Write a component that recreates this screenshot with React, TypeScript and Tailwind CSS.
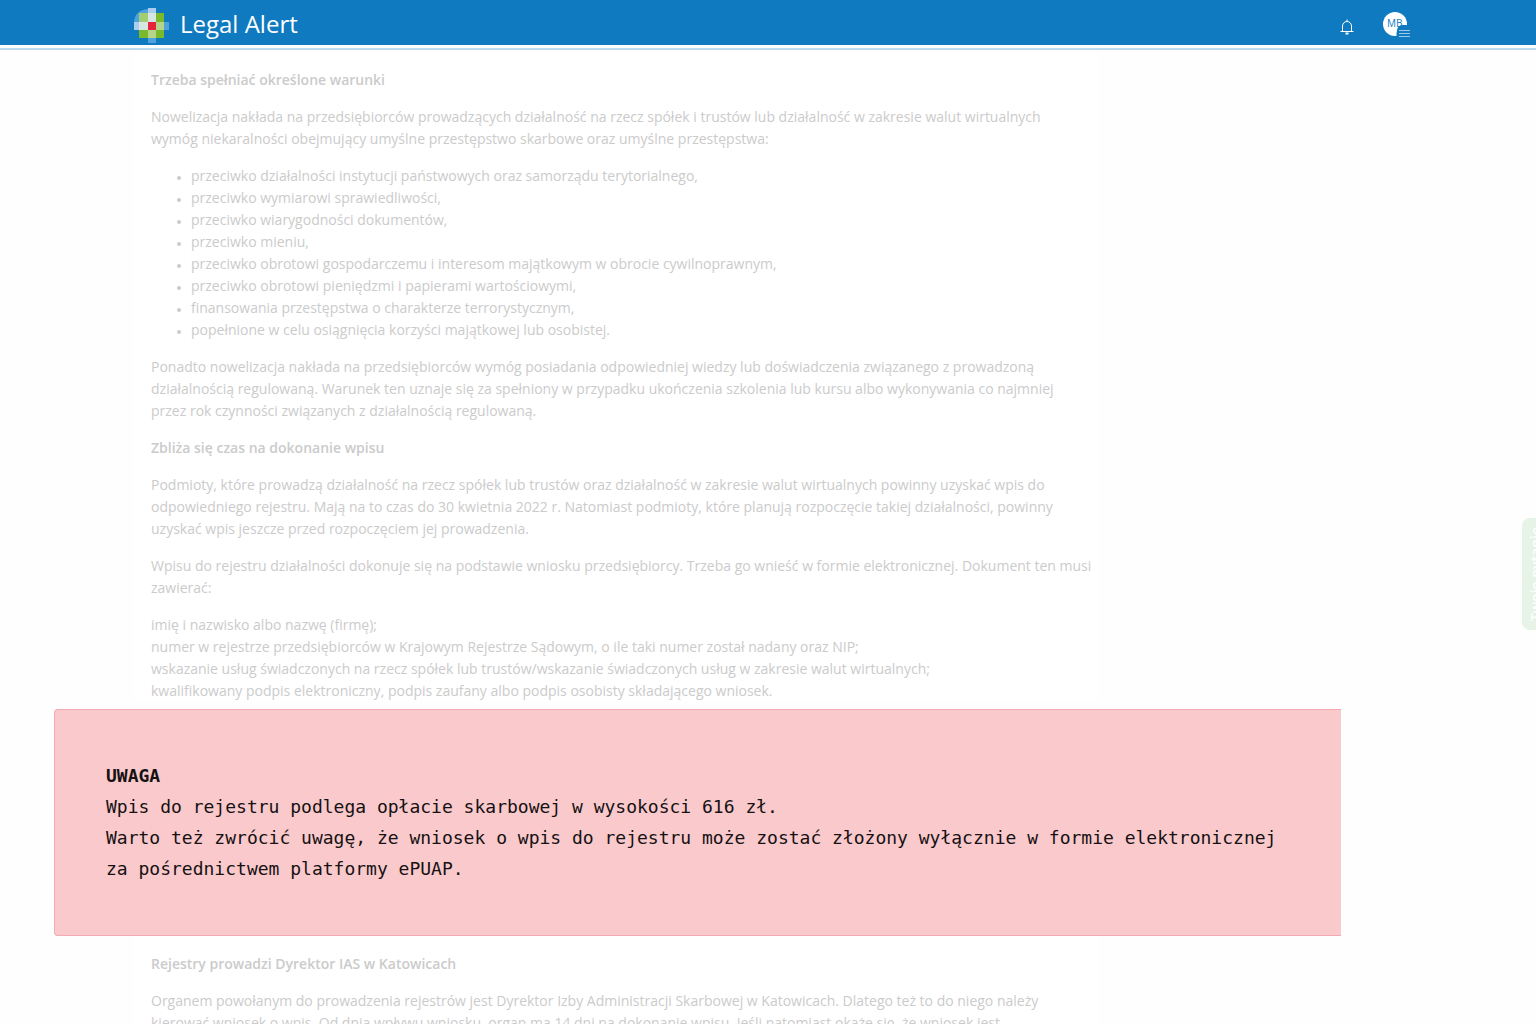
import type { ReactNode } from "react";

const crimes = [
  "przeciwko działalności instytucji państwowych oraz samorządu terytorialnego,",
  "przeciwko wymiarowi sprawiedliwości,",
  "przeciwko wiarygodności dokumentów,",
  "przeciwko mieniu,",
  "przeciwko obrotowi gospodarczemu i interesom majątkowym w obrocie cywilnoprawnym,",
  "przeciwko obrotowi pieniędzmi i papierami wartościowymi,",
  "finansowania przestępstwa o charakterze terrorystycznym,",
  "popełnione w celu osiągnięcia korzyści majątkowej lub osobistej.",
];

function Logo() {
  return (
    <svg width="36" height="36" viewBox="0 0 36 36" aria-hidden="true">
      <path d="M14 1Q1 2 0 14h5V5h9z" fill="#4fa3dc" />
      <path d="M5 5h25v25H5z" fill="#7ab929" />
      <path d="M5 5h9v9H5z" fill="#a3cd73" />
      <path d="M14 0h8v5h-8zM0 14h5v8H0z" fill="#a9cdee" />
      <path d="M14 5h8v9h-8zM5 14h9v8H5z" fill="#d5e6e3" />
      <path d="M14 22h8v8h-8zM22 14h8v8h-8z" fill="#b4d68a" />
      <path d="M30 14h5v8h-5zM14 30h8v5h-8z" fill="#4fa3dc" />
      <path d="M14 14h8v8h-8z" fill="#e4233c" />
    </svg>
  );
}

function Header() {
  return (
    <header className="relative z-10 border-b-2 border-[#b9dcf2] bg-white pb-[3px]">
      <div className="h-[45px] bg-[#0f7ac0]">
        <div className="mx-auto flex h-full max-w-[1276px] items-center justify-between pl-1">
          <a href="#" className="flex items-center gap-2.5 pt-1.5 text-2xl text-white">
            <Logo />
            <span className="pb-1">Legal Alert</span>
          </a>
          <div className="-mr-1 flex items-center gap-7 pt-1">
            <button aria-label="Powiadomienia" className="pt-1">
              <svg width="14" height="16" viewBox="0 0 14 16" fill="none" stroke="#fff" aria-hidden="true">
                <path d="M0.5 12.5h13M2.5 12.5V7a4.5 4.5 0 0 1 9 0v5.5M7 0.5v2" />
                <path d="M5.500 14.5h3" strokeWidth="2" />
              </svg>
            </button>
            <button aria-label="Menu użytkownika">
              <svg width="28" height="26" viewBox="0 0 28 26" aria-hidden="true">
                <circle cx="13" cy="12" r="12" fill="#fff" />
                <text x="5" y="15" fontSize="10" fill="#0f7ac0">MB</text>
                <path d="M15 26q-1-5 0-8 1-5 6-5h7v13z" fill="#0f7ac0" />
                <path d="M17 18.5h11M17 21.5h11M17 24.5h11" stroke="#9fcbe8" />
              </svg>
            </button>
          </div>
        </div>
      </div>
    </header>
  );
}

function Heading({ children }: { children: ReactNode }) {
  return <h2 className="font-semibold">{children}</h2>;
}

export default function App() {
  return (
    <div className="h-screen overflow-hidden bg-[#fefefe] font-['Open_Sans',sans-serif]">
      <Header />

      <main className="mx-auto max-w-[1276px] pl-1 text-sm leading-[22px] text-[#cbcbcb]">
        <article className="flex max-w-[964px] flex-col gap-[15px] bg-white pt-[19px] pl-[17px]">
          <Heading>Trzeba spełniać określone warunki</Heading>
          <p>
            Nowelizacja nakłada na przedsiębiorców prowadzących działalność na rzecz spółek i trustów lub działalność w zakresie walut wirtualnych
            <br />
            wymóg niekaralności obejmujący umyślne przestępstwo skarbowe oraz umyślne przestępstwa:
          </p>
          <ul className="list-disc pl-10 marker:text-[10px]">
            {crimes.map((crime) => (
              <li key={crime}>{crime}</li>
            ))}
          </ul>
          <p>
            Ponadto nowelizacja nakłada na przedsiębiorców wymóg posiadania odpowiedniej wiedzy lub doświadczenia związanego z prowadzoną
            <br />
            działalnością regulowaną. Warunek ten uznaje się za spełniony w przypadku ukończenia szkolenia lub kursu albo wykonywania co najmniej
            <br />
            przez rok czynności związanych z działalnością regulowaną.
          </p>
          <Heading>Zbliża się czas na dokonanie wpisu</Heading>
          <p>
            Podmioty, które prowadzą działalność na rzecz spółek lub trustów oraz działalność w zakresie walut wirtualnych powinny uzyskać wpis do
            <br />
            odpowiedniego rejestru. Mają na to czas do 30 kwietnia 2022 r. Natomiast podmioty, które planują rozpoczęcie takiej działalności, powinny
            <br />
            uzyskać wpis jeszcze przed rozpoczęciem jej prowadzenia.
          </p>
          <p>
            Wpisu do rejestru działalności dokonuje się na podstawie wniosku przedsiębiorcy. Trzeba go wnieść w formie elektronicznej. Dokument ten musi
            <br />
            zawierać:
          </p>
          <p>
            imię i nazwisko albo nazwę (firmę);
            <br />
            numer w rejestrze przedsiębiorców w Krajowym Rejestrze Sądowym, o ile taki numer został nadany oraz NIP;
            <br />
            wskazanie usług świadczonych na rzecz spółek lub trustów/wskazanie świadczonych usług w zakresie walut wirtualnych;
            <br />
            kwalifikowany podpis elektroniczny, podpis zaufany albo podpis osobisty składającego wniosek.
          </p>
        </article>

        <aside className="mt-[7px] mr-[65px] -ml-20 rounded-l border border-r-0 border-[#f5a9b1] bg-[#f9c9cc] pt-[50px] pb-[51px] pl-[51px] font-['DejaVu_Sans_Mono',monospace] text-lg leading-[31px] text-[#161112]">
          <h3 className="font-bold">UWAGA</h3>
          <p>Wpis do rejestru podlega opłacie skarbowej w wysokości 616 zł.</p>
          <p>
            Warto też zwrócić uwagę, że wniosek o wpis do rejestru może zostać złożony wyłącznie w formie elektronicznej
            <br />
            za pośrednictwem platformy ePUAP.
          </p>
        </aside>

        <article className="flex max-w-[964px] flex-col gap-[15px] bg-white pt-[17px] pl-[17px]">
          <Heading>Rejestry prowadzi Dyrektor IAS w Katowicach</Heading>
          <p>
            Organem powołanym do prowadzenia rejestrów jest Dyrektor Izby Administracji Skarbowej w Katowicach. Dlatego też to do niego należy
            <br />
            kierować wniosek o wpis. Od dnia wpływu wniosku, organ ma 14 dni na dokonanie wpisu. Jeśli natomiast okaże się, że wniosek jest
          </p>
        </article>
      </main>

      <button className="fixed top-[518px] right-0 h-28 w-3.5 overflow-hidden rounded-l-lg bg-[#e6f3e6] pl-1 text-sm font-semibold whitespace-nowrap text-white">
        <span className="block rotate-180 [writing-mode:vertical-rl]">Twoje pytanie</span>
      </button>
    </div>
  );
}
